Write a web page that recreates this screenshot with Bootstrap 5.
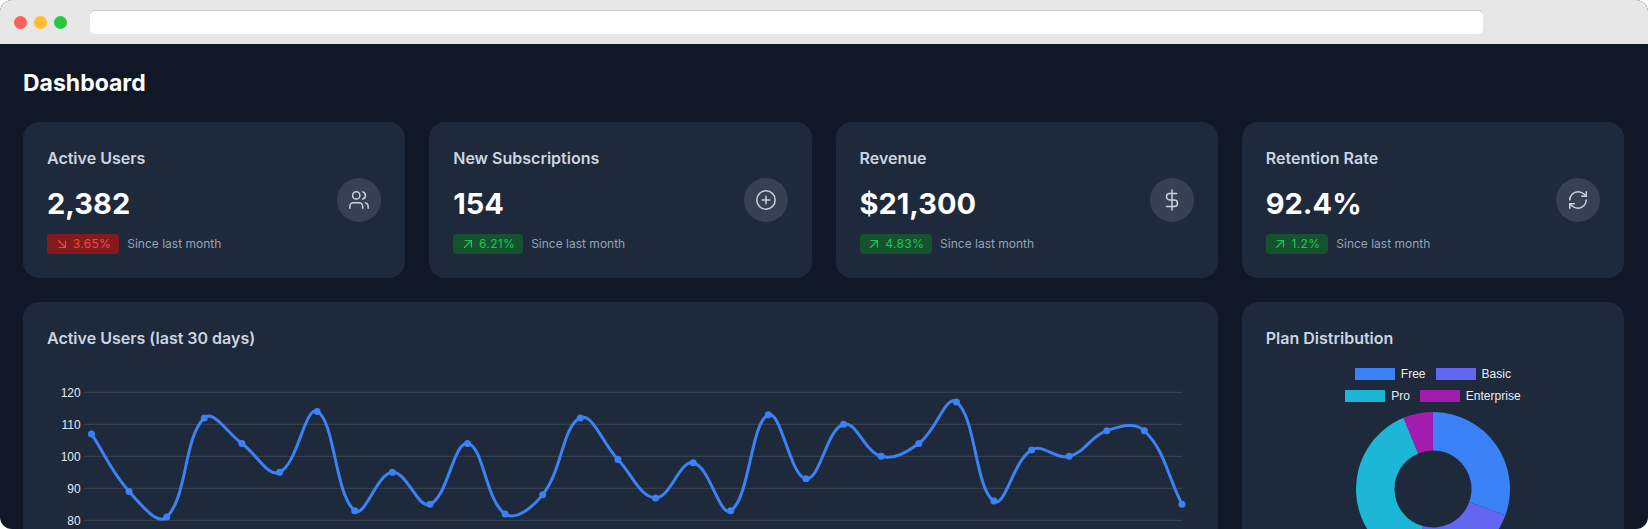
<!DOCTYPE html>
<html lang="en">
<head>
<meta charset="utf-8">
<title>Dashboard</title>
<link href="https://cdn.jsdelivr.net/npm/bootstrap@5.3.0/dist/css/bootstrap.min.css" rel="stylesheet">
<style>
html,body{height:100%;margin:0;background:#fff;overflow:hidden}
.app-window{height:529px;border-radius:12px;overflow:hidden;background:#101726;font-family:Inter,"Liberation Sans",sans-serif}
.chrome-bar{height:44px;background:#e7e7e7;padding:0 0 0 13.5px}
.light{width:13px;height:13px;border-radius:50%}
.light-r{background:#ff5f57}.light-y{background:#febc2e}.light-g{background:#28c840}
.light-gap{gap:7px}
.addr{width:1393px;height:24px;margin-left:23.5px;background:#fff;border-top:1px solid #c6c6c6;border-radius:5px}
.page-body{padding:24px 24px 24px 23px}
.page-title{font-size:23px;line-height:30px;font-weight:700;color:#fff;margin:0 0 24px}
.panel{background:#1e293b;border:0;border-radius:16px;padding:24px;color:#fff}
.stat-panel{padding-bottom:23.7px}
.panel-title{font-size:16px;line-height:24px;font-weight:600;color:#cbd5e1;margin:0}
.stat-value{font-size:29px;line-height:44px;font-weight:700;color:#fff;margin:12px 0 8px}
.stat-icon{width:44px;height:44px;border-radius:50%;background:#374151;color:#cbd5e1;flex:none}
.stat-icon svg{width:22px;height:22px;fill:none;stroke:currentColor;stroke-width:1.6;stroke-linecap:round;stroke-linejoin:round}
.delta{height:20px;padding:0 8px 0 7.7px;border-radius:4px;font-size:12px;line-height:20px;gap:4px;letter-spacing:.35px}
.delta svg{width:14px;height:14px;fill:none;stroke:currentColor;stroke-width:2;stroke-linecap:round;stroke-linejoin:round}
.delta-down{background:#851a1c;color:#f04a4f}
.delta-up{background:#14532d;color:#22c55e}
.since{font-size:12px;line-height:20px;color:#94a3b8;margin-left:8px}
.chart-panel{height:420px}
.line-svg{display:block;margin-top:24px;width:1146px;height:300px}
.line-svg text{font-family:"Liberation Sans",Arial,sans-serif;font-size:12px;fill:#e2e8f0}
.legend-wrap{margin-top:13px;font-family:"Liberation Sans",Arial,sans-serif;font-size:12px;line-height:22px;color:#e8edf3}
.legend-row{height:22px;gap:10px}
.swatch{width:40px;height:12px;margin-right:6px}
.donut-svg{display:block;margin:2px auto 0;width:160px;height:160px}
</style>
</head>
<body>
<div class="app-window">
  <div class="chrome-bar d-flex align-items-center">
    <div class="d-flex light-gap"><span class="light light-r"></span><span class="light light-y"></span><span class="light light-g"></span></div>
    <div class="addr"></div>
  </div>
  <div class="page-body">
    <h1 class="page-title">Dashboard</h1>
    <div class="row g-4">
      <div class="col-3">
        <div class="card panel stat-panel">
          <div class="d-flex align-items-center justify-content-between">
            <div>
              <h2 class="panel-title">Active Users</h2>
              <div class="stat-value">2,382</div>
              <div class="d-flex align-items-center">
                <span class="delta delta-down d-flex align-items-center"><svg viewBox="0 0 24 24"><path d="M6 6l12 12M18 7v11H7"/></svg>3.65%</span>
                <span class="since">Since last month</span>
              </div>
            </div>
            <div class="stat-icon d-flex align-items-center justify-content-center">
              <svg viewBox="0 0 24 24"><path d="M16 21v-2a4 4 0 0 0-4-4H6a4 4 0 0 0-4 4v2"/><circle cx="9" cy="7" r="4"/><path d="M22 21v-2a4 4 0 0 0-3-3.87"/><path d="M16 3.13a4 4 0 0 1 0 7.75"/></svg>
            </div>
          </div>
        </div>
      </div>
      <div class="col-3">
        <div class="card panel stat-panel">
          <div class="d-flex align-items-center justify-content-between">
            <div>
              <h2 class="panel-title">New Subscriptions</h2>
              <div class="stat-value">154</div>
              <div class="d-flex align-items-center">
                <span class="delta delta-up d-flex align-items-center"><svg viewBox="0 0 24 24"><path d="M6 18L18 6M7 6h11v11"/></svg>6.21%</span>
                <span class="since">Since last month</span>
              </div>
            </div>
            <div class="stat-icon d-flex align-items-center justify-content-center">
              <svg viewBox="0 0 24 24"><circle cx="12" cy="12" r="10"/><path d="M12 8v8M8 12h8"/></svg>
            </div>
          </div>
        </div>
      </div>
      <div class="col-3">
        <div class="card panel stat-panel">
          <div class="d-flex align-items-center justify-content-between">
            <div>
              <h2 class="panel-title">Revenue</h2>
              <div class="stat-value">$21,300</div>
              <div class="d-flex align-items-center">
                <span class="delta delta-up d-flex align-items-center"><svg viewBox="0 0 24 24"><path d="M6 18L18 6M7 6h11v11"/></svg>4.83%</span>
                <span class="since">Since last month</span>
              </div>
            </div>
            <div class="stat-icon d-flex align-items-center justify-content-center">
              <svg viewBox="0 0 24 24"><path d="M12 1v22"/><path d="M17 5H9.5a3.5 3.5 0 0 0 0 7h5a3.5 3.5 0 0 1 0 7H6"/></svg>
            </div>
          </div>
        </div>
      </div>
      <div class="col-3">
        <div class="card panel stat-panel">
          <div class="d-flex align-items-center justify-content-between">
            <div>
              <h2 class="panel-title">Retention Rate</h2>
              <div class="stat-value">92.4%</div>
              <div class="d-flex align-items-center">
                <span class="delta delta-up d-flex align-items-center"><svg viewBox="0 0 24 24"><path d="M6 18L18 6M7 6h11v11"/></svg>1.2%</span>
                <span class="since">Since last month</span>
              </div>
            </div>
            <div class="stat-icon d-flex align-items-center justify-content-center">
              <svg viewBox="0 0 24 24"><path d="M3 12a9 9 0 0 1 9-9 9.75 9.75 0 0 1 6.74 2.74L21 8"/><path d="M21 3v5h-5"/><path d="M21 12a9 9 0 0 1-9 9 9.75 9.75 0 0 1-6.74-2.74L3 16"/><path d="M8 16H3v5"/></svg>
            </div>
          </div>
        </div>
      </div>
      <div class="col-9">
        <div class="card panel chart-panel">
          <h2 class="panel-title">Active Users (last 30 days)</h2>
          <svg class="line-svg" id="lineChart" viewBox="0 0 1146 300"></svg>
        </div>
      </div>
      <div class="col-3">
        <div class="card panel chart-panel">
          <h2 class="panel-title">Plan Distribution</h2>
          <div class="legend-wrap">
            <div class="legend-row d-flex justify-content-center align-items-center">
              <span class="d-flex align-items-center"><span class="swatch" style="background:#3b82f6"></span>Free</span>
              <span class="d-flex align-items-center"><span class="swatch" style="background:#6366f1"></span>Basic</span>
            </div>
            <div class="legend-row d-flex justify-content-center align-items-center">
              <span class="d-flex align-items-center"><span class="swatch" style="background:#1cb7d6"></span>Pro</span>
              <span class="d-flex align-items-center"><span class="swatch" style="background:#a21caf"></span>Enterprise</span>
            </div>
          </div>
          <svg class="donut-svg" id="donut" viewBox="0 0 160 160"></svg>
        </div>
      </div>
    </div>
  </div>
</div>
<script src="https://cdn.jsdelivr.net/npm/bootstrap@5.3.0/dist/js/bootstrap.bundle.min.js"></script>
<script>
(function(){
  var data=[107,89,81,112,104,95,114,83,95,85,104,82,88,112,99,87,98,83,113,93,110,100,104,117,86,102,100,108,108,85];
  var x0=44.5,x1=1135,yBase=146.3,k=3.2;
  var pts=data.map(function(v,i){return {x:x0+(x1-x0)*i/(data.length-1),y:yBase-(v-80)*k};});
  var h='';
  [120,110,100,90,80].forEach(function(t){
    var y=yBase-(t-80)*k;
    h+='<line x1="37" x2="1135" y1="'+y+'" y2="'+y+'" stroke="#3b4656" stroke-width="1"/>';
    h+='<text x="33.7" y="'+(y+4.3)+'" text-anchor="end">'+t+'</text>';
  });
  var T=0.4,d='M'+pts[0].x+' '+pts[0].y,cps=pts.map(function(p,i){
    var a=pts[i-1]||p,b=pts[i+1]||p;
    var d1=Math.hypot(p.x-a.x,p.y-a.y),d2=Math.hypot(b.x-p.x,b.y-p.y),s=(d1+d2)||1;
    return {px:p.x-T*d1/s*(b.x-a.x),py:p.y-T*d1/s*(b.y-a.y),nx:p.x+T*d2/s*(b.x-a.x),ny:p.y+T*d2/s*(b.y-a.y)};
  });
  for(var i=1;i<pts.length;i++){
    d+='C'+cps[i-1].nx.toFixed(2)+' '+cps[i-1].ny.toFixed(2)+' '+cps[i].px.toFixed(2)+' '+cps[i].py.toFixed(2)+' '+pts[i].x.toFixed(2)+' '+pts[i].y.toFixed(2);
  }
  h+='<path d="'+d+'" fill="none" stroke="#3b82f6" stroke-width="3"/>';
  pts.forEach(function(p){h+='<circle cx="'+p.x+'" cy="'+p.y+'" r="3.5" fill="#3b82f6"/>';});
  document.getElementById('lineChart').innerHTML=h;

  var segs=[[0,109.9,'#3b82f6'],[109.9,195.5,'#6366f1'],[195.5,337.5,'#1cb7d6'],[337.5,360,'#a21caf']];
  var c=80,R=77,r=38.5,out='';
  function pt(rad,deg){var a=deg*Math.PI/180;return (c+rad*Math.sin(a)).toFixed(2)+' '+(c-rad*Math.cos(a)).toFixed(2);}
  segs.forEach(function(s){
    var l=(s[1]-s[0])>180?1:0;
    out+='<path fill="'+s[2]+'" d="M'+pt(R,s[0])+'A'+R+' '+R+' 0 '+l+' 1 '+pt(R,s[1])+'L'+pt(r,s[1])+'A'+r+' '+r+' 0 '+l+' 0 '+pt(r,s[0])+'Z"/>';
  });
  document.getElementById('donut').innerHTML=out;
})();
</script>
</body>
</html>
